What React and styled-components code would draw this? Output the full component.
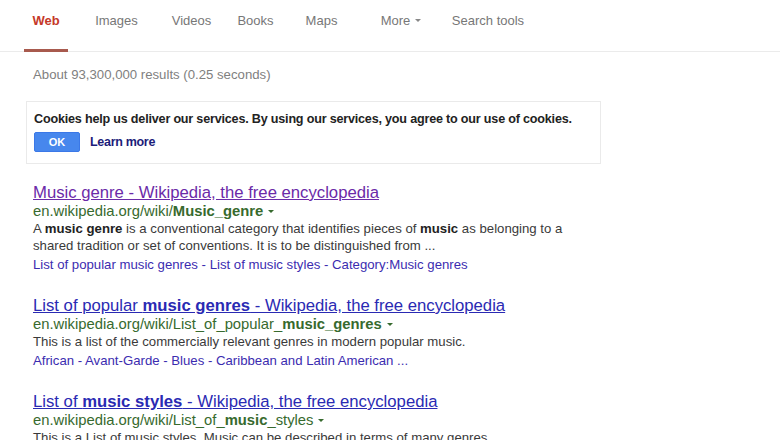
import React from "react";
import styled, { createGlobalStyle } from "styled-components";

const Global = createGlobalStyle`
  html, body { margin: 0; padding: 0; background: #fff; }
  body { font-family: "Liberation Sans", Arial, sans-serif; width: 780px; height: 440px; overflow: hidden; }
`;

const Page = styled.div`
  width: 780px;
  height: 440px;
  overflow: hidden;
  background: #fff;
`;

const TabBar = styled.nav`
  display: flex;
  align-items: flex-start;
  height: 52px;
  padding-left: 24px;
  border-bottom: 1px solid #ebebeb;
  box-sizing: border-box;
`;

const Tab = styled.div`
  box-sizing: border-box;
  height: 52px;
  padding: 13px 0 0;
  margin-left: ${(p) => p.$ml}px;
  width: ${(p) => p.$w}px;
  text-align: center;
  font-size: 13px;
  color: ${(p) => (p.$active ? "#c53929" : "#777")};
  font-weight: ${(p) => (p.$active ? "bold" : "normal")};
  border-bottom: 3px solid ${(p) => (p.$active ? "#a85a4e" : "transparent")};
  white-space: nowrap;
`;

const Caret = styled.span`
  display: inline-block;
  margin-left: 5px;
  vertical-align: middle;
  width: 0;
  height: 0;
  border-left: 3px solid transparent;
  border-right: 3px solid transparent;
  border-top: 3px solid ${(p) => p.$color || "#888"};
  position: relative;
  top: -1px;
`;

const Content = styled.main`
  padding-left: 33px;
`;

const Stats = styled.div`
  font-size: 13.2px;
  color: #808080;
  padding-top: 15px;
  height: 33px;
  box-sizing: border-box;
`;

const CookieBox = styled.div`
  margin-left: -7px;
  width: 575px;
  height: 63px;
  box-sizing: border-box;
  border: 1px solid #eaeaea;
  padding: 10px 7px 0;
  margin-top: 16px;
`;

const CookieText = styled.div`
  font-size: 12.6px;
  font-weight: bold;
  color: #222;
  letter-spacing: -0.2px;
`;

const CookieActions = styled.div`
  display: flex;
  align-items: center;
  gap: 10px;
  margin-top: 6px;
`;

const OkButton = styled.div`
  width: 46px;
  height: 20px;
  background: #4787ed;
  border: 1px solid #3b78e7;
  box-sizing: border-box;
  border-radius: 2px;
  color: #fff;
  font-weight: bold;
  font-size: 11px;
  display: flex;
  align-items: center;
  justify-content: center;
`;

const LearnMore = styled.span`
  font-size: 12.5px;
  color: #1c1c7a;
  font-weight: bold;
  letter-spacing: -0.3px;
`;

const Results = styled.div`
  margin-top: 19px;
  display: flex;
  flex-direction: column;
  gap: 23px;
`;

const Result = styled.div``;

const Title = styled.div`
  font-size: 16.7px;
  line-height: 19px;
  color: ${(p) => (p.$visited ? "#6b2aa8" : "#2a2ab3")};
  text-decoration: underline;
  white-space: nowrap;
`;

const Url = styled.div`
  font-size: 14.8px;
  line-height: 18px;
  color: #376a2e;
  white-space: nowrap;
  b { font-weight: bold; }
`;

const Snippet = styled.div`
  font-size: 13.2px;
  line-height: 17px;
  color: #3a3a3a;
  width: 545px;
  b { font-weight: bold; color: #222; }
`;

const Sitelinks = styled.div`
  font-size: 13.2px;
  line-height: 17px;
  color: #3b2cb0;
  margin-top: 2px;
`;

const tabs = [
  { label: "Web", ml: 0, w: 44, active: true },
  { label: "Images", ml: 27, w: 43 },
  { label: "Videos", ml: 32, w: 43 },
  { label: "Books", ml: 19, w: 47 },
  { label: "Maps", ml: 26, w: 33 },
  { label: "More", ml: 42, w: 42, caret: true },
  { label: "Search tools", ml: 28, w: 76 },
];

export default function App() {
  return (
    <Page>
      <Global />
      <TabBar>
        {tabs.map((t) => (
          <Tab key={t.label} $ml={t.ml} $w={t.w} $active={t.active}>
            {t.label}
            {t.caret && <Caret />}
          </Tab>
        ))}
      </TabBar>
      <Content>
        <Stats>About 93,300,000 results (0.25 seconds)</Stats>
        <CookieBox>
          <CookieText>
            Cookies help us deliver our services. By using our services, you agree to our use of cookies.
          </CookieText>
          <CookieActions>
            <OkButton>OK</OkButton>
            <LearnMore>Learn more</LearnMore>
          </CookieActions>
        </CookieBox>
        <Results>
          <Result>
            <Title $visited>Music genre - Wikipedia, the free encyclopedia</Title>
            <Url>
              en.wikipedia.org/wiki/<b>Music_genre</b>
              <Caret $color="#376a2e" />
            </Url>
            <Snippet>
              A <b>music genre</b> is a conventional category that identifies pieces of <b>music</b> as belonging to a
              shared tradition or set of conventions. It is to be distinguished from ...
            </Snippet>
            <Sitelinks>List of popular music genres - List of music styles - Category:Music genres</Sitelinks>
          </Result>
          <Result>
            <Title>
              List of popular <b>music genres</b> - Wikipedia, the free encyclopedia
            </Title>
            <Url>
              en.wikipedia.org/wiki/List_of_popular_<b>music_genres</b>
              <Caret $color="#376a2e" />
            </Url>
            <Snippet>This is a list of the commercially relevant genres in modern popular music.</Snippet>
            <Sitelinks>African - Avant-Garde - Blues - Caribbean and Latin American ...</Sitelinks>
          </Result>
          <Result>
            <Title>
              List of <b>music styles</b> - Wikipedia, the free encyclopedia
            </Title>
            <Url>
              en.wikipedia.org/wiki/List_of_<b>music</b>_styles
              <Caret $color="#376a2e" />
            </Url>
            <Snippet>This is a List of music styles. Music can be described in terms of many genres.</Snippet>
          </Result>
        </Results>
      </Content>
    </Page>
  );
}
